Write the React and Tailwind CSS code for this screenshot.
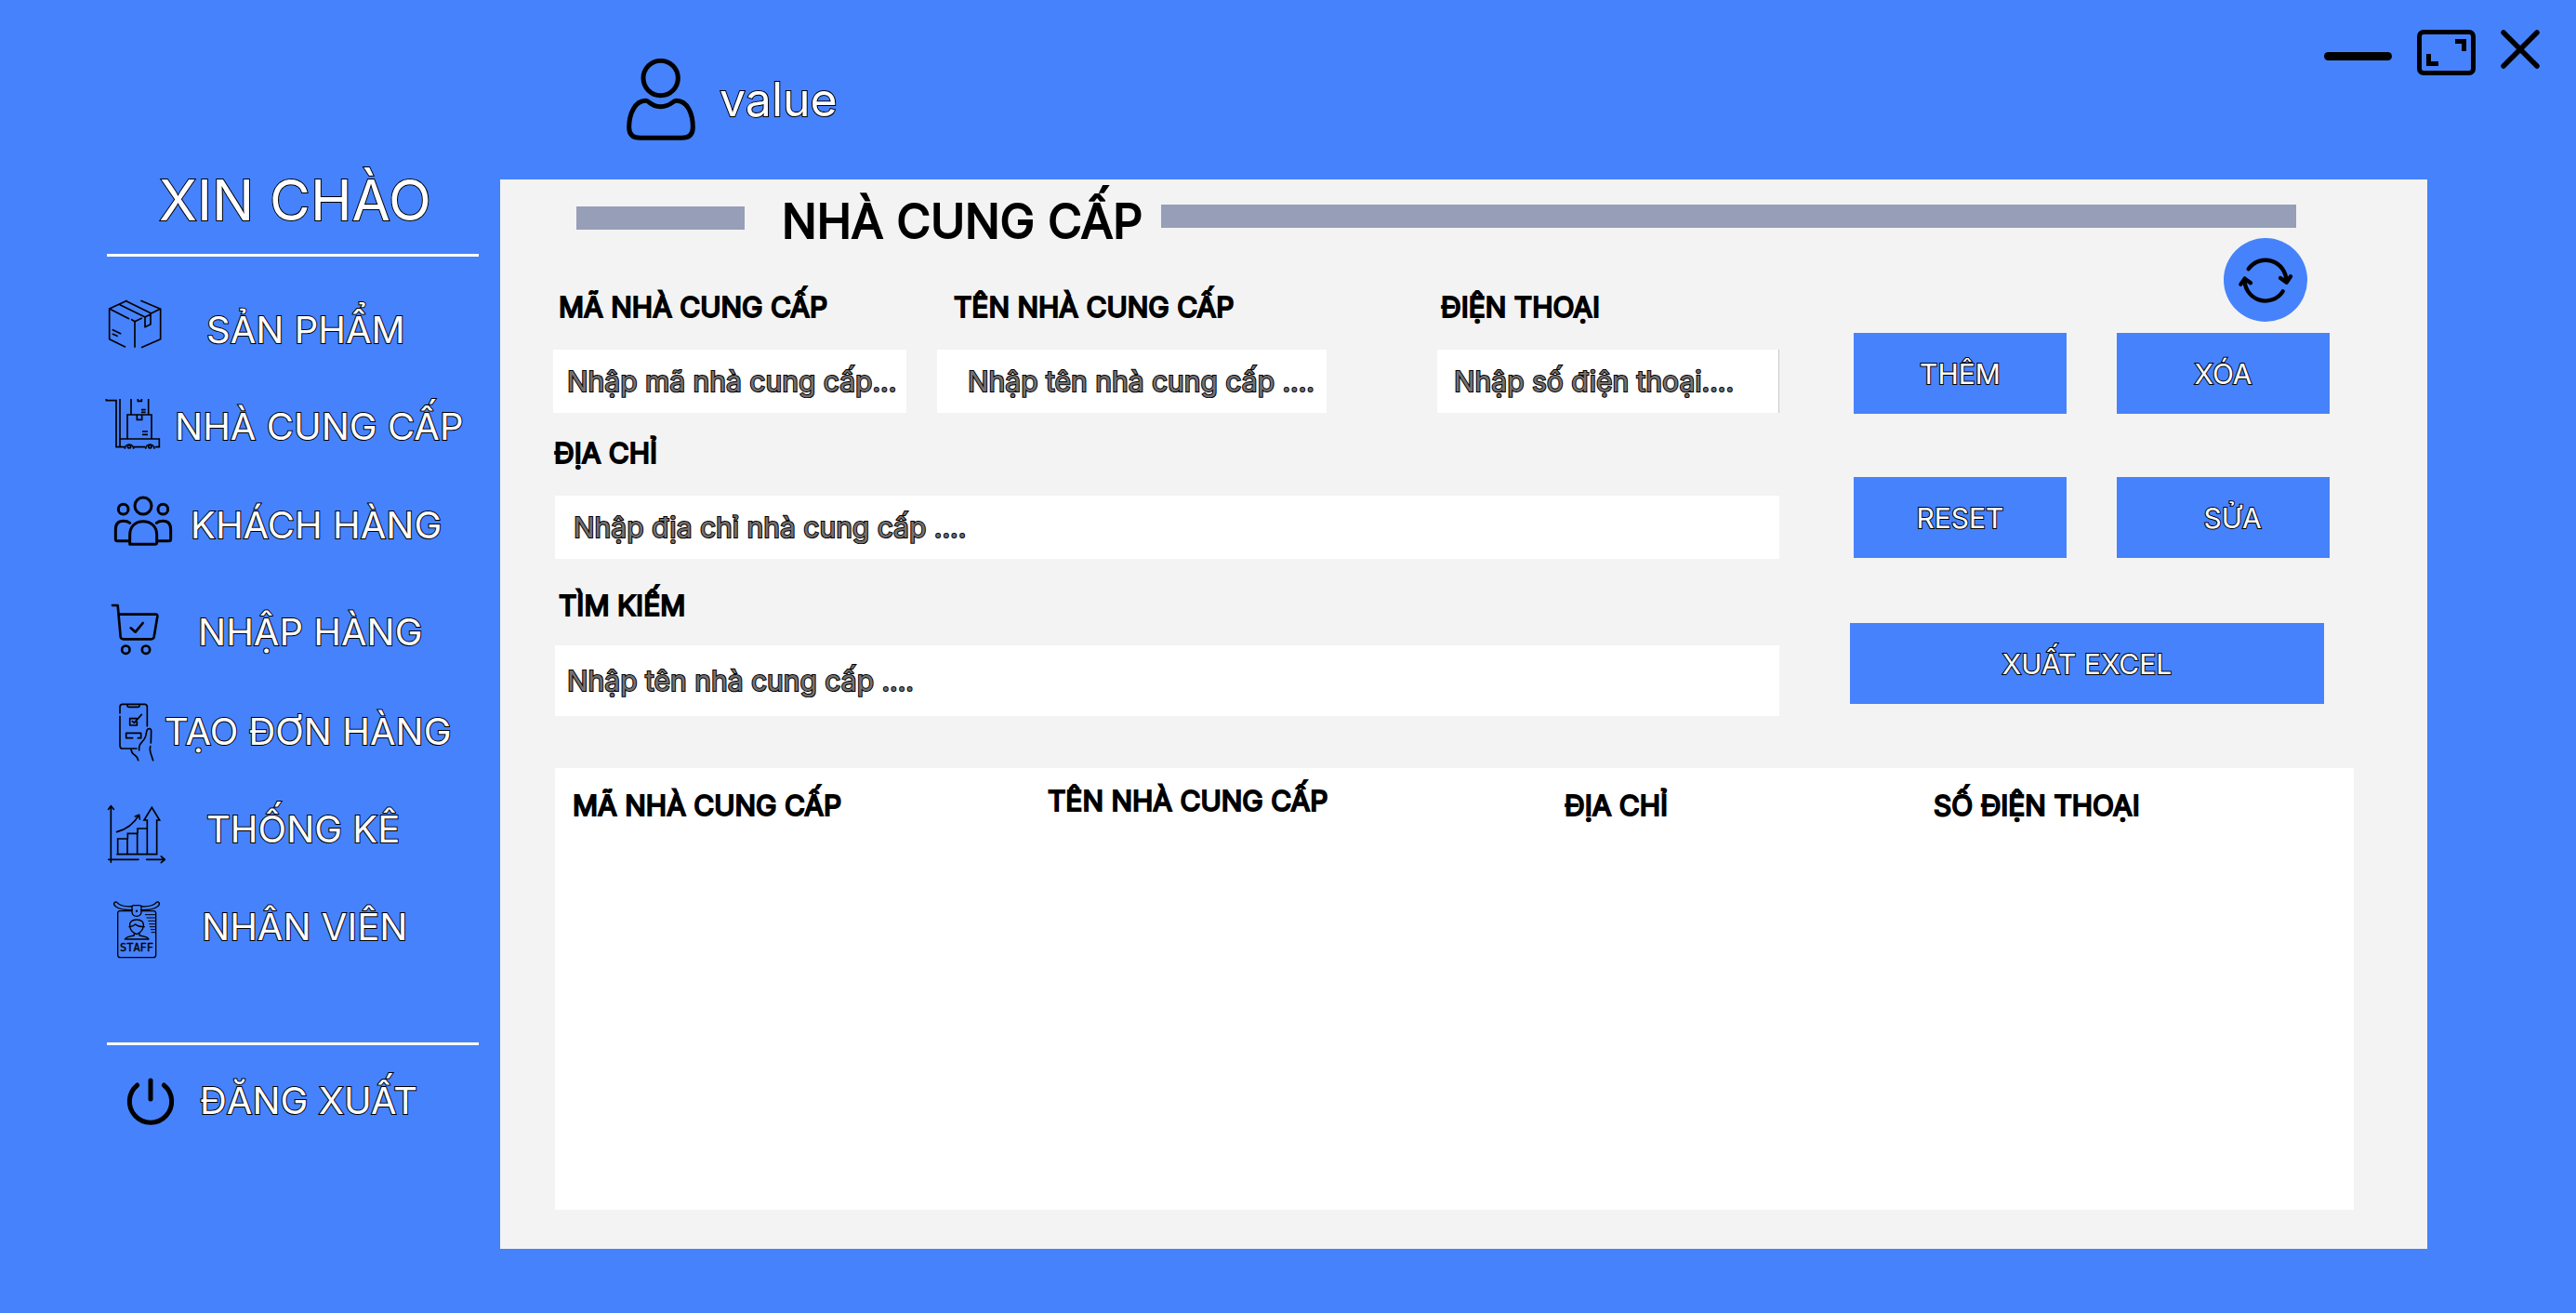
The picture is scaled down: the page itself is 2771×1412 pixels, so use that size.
const outline = "text-white [-webkit-text-stroke:2px_black] [paint-order:stroke_fill]";
const inked = "text-black [-webkit-text-stroke:2px_black] [paint-order:stroke_fill]";
const field =
  "w-full min-w-0 bg-white text-[30px] leading-10 text-black outline-none placeholder:text-[#757171] placeholder:opacity-100 [-webkit-text-stroke:2px_black] [paint-order:stroke_fill]";

function Glyph({ box, width = 5, className = "size-16", children }) {
  return (
    <svg
      viewBox={box}
      className={`${className} shrink-0 overflow-visible`}
      fill="none"
      stroke="black"
      strokeWidth={width}
      strokeLinecap="round"
      strokeLinejoin="round"
      aria-hidden="true"
    >
      {children}
    </svg>
  );
}

const BoxIcon = () => (
  <Glyph box="75 489 192 192" width={5}>
    <path strokeLinecap="butt" d="M135 640 83 614V516L140 490M184 490l64 27v97l-62 27M165 641V557" />
    <path d="m83 516 63 32M155 551l10 6 22-10M117 503l81 40 18-9M137 491l81 40M198 543v32l18-9v-34l31-15M94 584l25 12M94 598l14 6" />
  </Glyph>
);

const TrolleyIcon = () => (
  <Glyph box="75 801 192 192" width={5}>
    <path strokeLinecap="butt" strokeLinejoin="miter" d="M73 807v5h32v150h27M117 807v129h127v26h-14M162 962h36M153 807v50M209 807v50M141 936v-78h78v78M172 858v16h16v-16M175 807v7h12v-7M186 842h14M186 850h14M189 912h18M189 922h18M117 936v26" />
    <path strokeLinecap="butt" d="M133 968a14 14 0 1 1 28 0M200 968a14 14 0 1 1 28 0" />
    <circle cx="147" cy="961" r="5" />
    <circle cx="214" cy="961" r="5" />
  </Glyph>
);

const PeopleIcon = () => (
  <Glyph box="75 99 192 192" width={9}>
    <circle cx="192" cy="132" r="27" />
    <circle cx="128" cy="143" r="16" />
    <circle cx="256" cy="143" r="16" />
    <path d="M149 256V226c0-28 18-44 43-44s44 16 44 44v24q0 6-6 6h-76q-5 0-5-5M149 245h-40q-6 0-6-6v-30c0-20 10-28 25-28 9 0 16 2 21 6M236 245h39q6 0 6-6v-30c0-20-10-28-25-28-9 0-16 2-21 6" />
  </Glyph>
);

const CartIcon = () => (
  <Glyph box="75 444 192 192" width={8}>
    <path d="M93 453h17l9 101q1 8 9 8h90q7 0 9-7l11-66q1-7-6-7H114M152 526l15 13 24-29" />
    <circle cx="136" cy="596" r="12.5" />
    <circle cx="201" cy="596" r="12.5" />
  </Glyph>
);

const PhoneIcon = () => (
  <Glyph box="75 765 192 192" width={5}>
    <path d="M117 801v-20q0-8 7-9h74q7 1 7 9v62M117 811v94q0 10 9 10h45M141 772v4q0 5 6 5h28q5 0 5-5v-4M171 818h-22v22h23v-12M157 827l6 5 24-27M158 881h-21v-16h48v16h-10" />
    <path d="M179 920v-9q2-11 10-18 7-7 11-18l4-19q3-6 9-5 5 1 5 6l-1 40M215 908q-3 11 1 21l8 24M153 918q3 14 12 18 9 6 11 17" />
  </Glyph>
);

const ChartIcon = () => (
  <Glyph box="75 60 192 192" width={5}>
    <path d="M88 262V80M80 91l8-11 9 11M80 253h97M203 253h59M250 243l12 10-12 10M107 164q48-13 71-54M166 114l13-5 2 14" />
    <path strokeLinejoin="miter" d="M110 236v-50h31v50M142 186v-17h31v67M174 169v-16h31v83M205 153v-27h-10l25-41 25 41h-9v110H108" />
  </Glyph>
);

const BadgeIcon = () => (
  <Glyph box="75 375 192 192" width={4}>
    <path d="M156 404q-34 3-48-12-5-5-9 0-4 6 4 12 14 12 54 12M186 404q34 3 48-12 5-5 9 0 4 6-4 12-14 12-54 12" />
    <path d="M156 405q0-4 5-4h20q5 0 5 4v18q-1 12-15 13-14-1-15-13zM156 419h-40q-6 1-6 8v133q0 9 8 9h107q8 0 8-9V427q0-7-6-8h-40" />
    <circle cx="171" cy="419" r="1.5" />
    <path d="M149 468c-2-14 7-21 22-21s24 7 22 21M147 470q12-1 20-8 8 8 29 8M149 470q4 18 22 24 17-6 22-24M163 491v7l-18 4q-9 3-12 8h77q-3-6-12-8l-18-4v-7" />
    <path strokeWidth="3" d="M199 431h31M204 441h26M209 451h21M212 461h18M214 470h16M217 479h13M219 488h11" />
    <text
      x="171"
      y="550"
      textAnchor="middle"
      fill="black"
      strokeWidth="1"
      fontFamily="'DejaVu Sans Mono', monospace"
      fontSize="36"
    >
      STAFF
    </text>
  </Glyph>
);

const PowerIcon = () => (
  <Glyph box="75 936 192 192" width={15}>
    <path d="M216 966v60M173 981a68 68 0 1 0 86 0" />
  </Glyph>
);

const menu = [
  { label: "SẢN PHẨM", Icon: BoxIcon, row: "mt-[47px]", gap: "ml-[43px]" },
  { label: "NHÀ CUNG CẤP", Icon: TrolleyIcon, row: "mt-10", gap: "ml-[9px]" },
  { label: "KHÁCH HÀNG", Icon: PeopleIcon, row: "mt-[42px]", gap: "ml-[26px]" },
  { label: "NHẬP HÀNG", Icon: CartIcon, row: "mt-[51px]", gap: "ml-[34px]" },
  { label: "TẠO ĐƠN HÀNG", Icon: PhoneIcon, row: "mt-[43px]", gap: "-ml-0.5" },
  { label: "THỐNG KÊ", Icon: ChartIcon, row: "mt-[41px]", gap: "ml-[43px]" },
  { label: "NHÂN VIÊN", Icon: BadgeIcon, row: "mt-[41px]", gap: "ml-[38px]" },
];

function MenuLink({ label, Icon, row, gap }) {
  return (
    <a href="#" className={`flex h-16 items-center whitespace-nowrap text-[40px] leading-[64px] ${outline} ${row}`}>
      <Icon />
      <span className={gap}>{label}</span>
    </a>
  );
}

function Sidebar() {
  return (
    <aside className="w-[538px] shrink-0 pl-[115px] pr-[23px] pt-[175px]">
      <p className={`pl-14 text-[60px] leading-[80px] ${outline}`}>XIN CHÀO</p>
      <hr className="mt-[18px] h-[3px] border-0 bg-white" />
      <nav>
        {menu.map((item) => (
          <MenuLink key={item.label} {...item} />
        ))}
      </nav>
      <hr className="mt-[92px] h-[3px] border-0 bg-white" />
      <MenuLink label="ĐĂNG XUẤT" Icon={PowerIcon} row="mt-7" gap="ml-9" />
    </aside>
  );
}

function TopBar() {
  return (
    <header className="flex h-[193px] items-start justify-between pl-[136px] pr-[39px]">
      <div className="flex items-center pt-[63px]">
        <svg viewBox="0 0 222 264" className="h-[88px] w-[74px]" fill="none" stroke="black" strokeWidth="15" strokeLinejoin="round" aria-hidden="true">
          <circle cx="110" cy="63" r="56" />
          <path d="M62 136c13 0 14 19 48 19s37-19 50-19C198 136 214 180 214 222q0 34-36 34H44Q8 256 8 222C8 180 26 136 62 136z" />
        </svg>
        <span className={`ml-[26px] text-[50px] leading-[60px] ${outline}`}>value</span>
      </div>
      <div className="flex items-start pt-8">
        <button type="button" aria-label="Thu nhỏ" className="mr-[27px] mt-6">
          <svg viewBox="0 0 73 9" className="h-[9px] w-[73px]">
            <rect width="73" height="9" rx="4.500" />
          </svg>
        </button>
        <button type="button" aria-label="Phóng to" className="mr-[27px]">
          <svg viewBox="0 0 63 49" className="h-[49px] w-[63px]" fill="none" stroke="black" strokeWidth="5">
            <rect x="2.500" y="2.500" width="58" height="44" rx="4.500" />
            <path d="M41 12.500h9.500V23M12.500 26v10.500H23" />
          </svg>
        </button>
        <button type="button" aria-label="Đóng">
          <svg viewBox="0 0 42 42" className="size-[42px]" fill="none" stroke="black" strokeWidth="5.500" strokeLinecap="round">
            <path d="m3 3 36 36M39 3 3 39" />
          </svg>
        </button>
      </div>
    </header>
  );
}

function SupplierForm() {
  const label = `block text-[30px] leading-10 whitespace-nowrap ${inked}`;
  return (
    <form className="flex-1 pt-[54px]">
      <div className="grid grid-cols-[380fr_33fr_419fr_119fr_368fr]">
        <div>
          <label htmlFor="code" className={`${label} pl-1.5`}>MÃ NHÀ CUNG CẤP</label>
          <input id="code" type="text" placeholder="Nhập mã nhà cung cấp..." className={`${field} mt-[26px] h-[68px] pl-[15px]`} />
        </div>
        <div className="col-start-3">
          <label htmlFor="name" className={`${label} pl-[18px]`}>TÊN NHÀ CUNG CẤP</label>
          <input id="name" type="text" placeholder="Nhập tên nhà cung cấp ...." className={`${field} mt-[26px] h-[68px] pl-[33px]`} />
        </div>
        <div className="col-start-5">
          <label htmlFor="phone" className={`${label} pl-1`}>ĐIỆN THOẠI</label>
          <input id="phone" type="text" placeholder="Nhập số điện thoại...." className={`${field} mt-[26px] h-[68px] border-r border-[#c8c8c8] pl-[18px]`} />
        </div>
      </div>
      <label htmlFor="address" className={`${label} mt-[23px] pl-px`}>ĐỊA CHỈ</label>
      <div className="pl-0.5">
        <input id="address" type="text" placeholder="Nhập địa chỉ nhà cung cấp ...." className={`${field} mt-[26px] h-[68px] pl-5`} />
      </div>
      <label htmlFor="search" className={`${label} mt-[30px] pl-1.5`}>TÌM KIẾM</label>
      <div className="pl-0.5">
        <input id="search" type="search" placeholder="Nhập tên nhà cung cấp ...." className={`${field} mt-[23px] h-[76px] pl-[13px]`} />
      </div>
    </form>
  );
}

function Actions() {
  const button = `h-[87px] bg-[#4682fb] text-[30px] leading-10 ${outline}`;
  return (
    <div className="ml-[76px] flex w-[516px] shrink-0 flex-col">
      <button type="button" aria-label="Làm mới" className="mr-6 flex size-[90px] items-center justify-center self-end rounded-full bg-[#4682fb]">
        <svg viewBox="36 18 270 270" className="size-[90px]" fill="none" stroke="black" strokeWidth="13" strokeLinecap="round" strokeLinejoin="round" aria-hidden="true">
          <path d="M116 118A67 67 0 0 1 238 158M219 147l20 14 13-19M227 190A67 67 0 0 1 104 148M91 167l13-18 19 14" />
        </svg>
      </button>
      <div className="mt-3 grid grid-cols-2 gap-x-[54px] gap-y-[68px] pl-1">
        <button type="button" className={button}>THÊM</button>
        <button type="button" className={button}>XÓA</button>
        <button type="button" className={button}>RESET</button>
        <button type="button" className={`${button} pl-5`}>SỬA</button>
      </div>
      <button type="button" className={`${button} mr-1.5 mt-[70px]`}>XUẤT EXCEL</button>
    </div>
  );
}

function SupplierTable() {
  const head = `h-20 pl-[19px] text-left text-[30px] font-normal leading-10 whitespace-nowrap ${inked}`;
  return (
    <div className="ml-[59px] mr-[79px] mt-14 flex-1 bg-white">
      <table className="w-full table-fixed">
        <thead>
          <tr>
            <th scope="col" className={`${head} w-[511px]`}>MÃ NHÀ CUNG CẤP</th>
            <th scope="col" className={`${head} w-[556px] pb-2.5`}>TÊN NHÀ CUNG CẤP</th>
            <th scope="col" className={`${head} w-[397px]`}>ĐỊA CHỈ</th>
            <th scope="col" className={head}>SỐ ĐIỆN THOẠI</th>
          </tr>
        </thead>
        <tbody />
      </table>
    </div>
  );
}

export default function App() {
  return (
    <div className="flex min-h-screen w-full bg-[#4682fb] font-['Inter',sans-serif]">
      <Sidebar />
      <div className="flex min-w-0 flex-1 flex-col pb-[69px]">
        <TopBar />
        <main className="mr-40 flex flex-1 flex-col bg-[#f3f3f3] pb-[42px]">
          <div className="flex h-[63px] items-center pl-[82px] pr-[141px] pt-4">
            <div className="mt-1 h-[25px] w-[181px] bg-[#979eb8]" />
            <h1 className={`ml-10 pt-[11px] text-[50px] leading-[60px] whitespace-nowrap ${inked}`}>NHÀ CUNG CẤP</h1>
            <div className="ml-5 h-[25px] flex-1 bg-[#979eb8]" />
          </div>
          <div className="flex items-start pl-[57px] pr-[105px]">
            <SupplierForm />
            <Actions />
          </div>
          <SupplierTable />
        </main>
      </div>
    </div>
  );
}
